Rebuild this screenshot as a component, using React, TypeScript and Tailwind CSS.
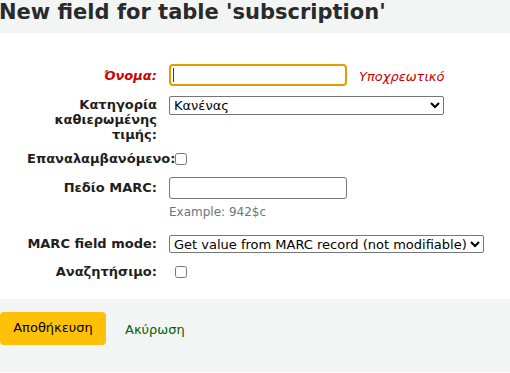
const font = "font-['DejaVu_Sans',sans-serif]";

const Label = ({ children, red }: { children: React.ReactNode; red?: boolean }) => (
  <label
    className={`block ml-[27px] mr-[12px] w-[130px] shrink-0 text-right text-[13px] font-bold leading-[15px] ${
      red ? "text-[#cc0000] italic" : "text-[#1e1e1e]"
    }`}
  >
    {children}
  </label>
);

export default function App() {
  return (
    <div className={`${font} w-[510px] h-[373px] bg-white text-[#1e1e1e]`}>
      {/* page title */}
      <div className="h-[34px] bg-[#f3f4f4]">
        <h1 className="text-[21px] font-bold leading-[26px] text-[#282a2c] -ml-[1px] -mt-[1px] whitespace-nowrap">
          New field for table 'subscription'
        </h1>
      </div>

      <form className="pt-[31px]">
        {/* Όνομα */}
        <div className="flex items-start">
          <div className="pt-[4px]">
            <Label red>Όνομα:</Label>
          </div>
          <div className="relative">
            <input
              type="text"
              className="block w-[178px] h-[22px] rounded-[4px] border-2 border-[#e69a00] bg-white outline-none"
            />
            <span className="absolute left-[4px] top-[4px] h-[14px] w-px bg-[#cc0000]" />
          </div>
          <span className="ml-[12px] pt-[3px] text-[13px] italic text-[#cc0000]">Υποχρεωτικό</span>
        </div>

        {/* Κατηγορία */}
        <div className="flex items-start mt-[9px]">
          <div className="pt-[1px]">
            <Label>
              Κατηγορία
              <br />
              καθιερωμένης
              <br />
              τιμής:
            </Label>
          </div>
          <select className="w-[275px] h-[19px] border border-[#767676] rounded-[2px] bg-white text-[13px] text-black">
            <option>Κανένας</option>
          </select>
        </div>

        {/* Επαναλαμβανόμενο */}
        <div className="flex items-center mt-[10px] h-[14px]">
          <label className="block ml-[27px] w-[130px] shrink-0 whitespace-nowrap text-[13px] font-bold text-[#1e1e1e]">
            Επαναλαμβανόμενο:
          </label>
          <input type="checkbox" className="ml-[18px] w-[12px] h-[12px]" />
        </div>

        {/* Πεδίο MARC */}
        <div className="flex items-start mt-[11px]">
          <div className="pt-[3px]">
            <Label>Πεδίο MARC:</Label>
          </div>
          <div>
            <input
              type="text"
              className="block w-[178px] h-[22px] rounded-[3px] border border-[#767676] bg-white"
            />
            <div className="mt-[6px] text-[12px] leading-[14px] text-[#6c757d]">Example: 942$c</div>
          </div>
        </div>

        {/* MARC field mode */}
        <div className="flex items-start mt-[16px]">
          <div className="pt-[1px]">
            <Label>MARC field mode:</Label>
          </div>
          <select className="w-[315px] h-[18px] border border-[#767676] rounded-[2px] bg-white text-[13px] text-black">
            <option>Get value from MARC record (not modifiable)</option>
          </select>
        </div>

        {/* Αναζητήσιμο */}
        <div className="flex items-center mt-[12px] h-[14px]">
          <Label>Αναζητήσιμο:</Label>
          <input type="checkbox" className="ml-[6px] w-[12px] h-[12px]" />
        </div>

        {/* actions */}
        <div className="mt-[20px] h-[74px] bg-[#f3f4f4] pt-[13px] flex items-start">
          <button
            type="button"
            className="h-[33px] w-[106px] rounded-[4px] bg-[#ffc107] text-[13px] text-black"
          >
            Αποθήκευση
          </button>
          <a href="#" className="ml-[19px] mt-[8px] text-[13px] text-[#006100]">
            Ακύρωση
          </a>
        </div>
      </form>
    </div>
  );
}
